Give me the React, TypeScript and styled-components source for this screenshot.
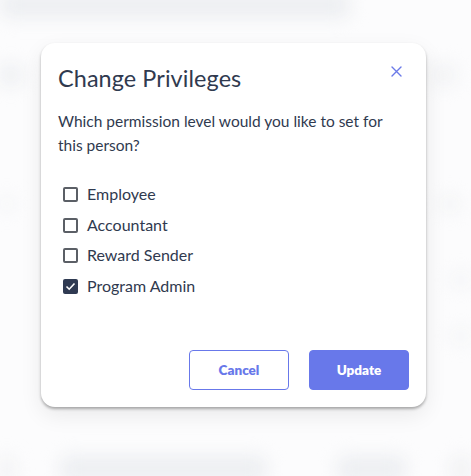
import React, { useState } from "react";
import styled, { createGlobalStyle } from "styled-components";

const Global = createGlobalStyle`
  html, body { margin: 0; padding: 0; background: #fcfcfd; }
  body { font-family: Lato, "Noto Sans", sans-serif; }
  * { box-sizing: border-box; }
`;

const Page = styled.div`
  position: relative;
  width: 471px;
  height: 476px;
  overflow: hidden;
  background: #fcfcfd;
`;

const Backdrop = styled.div`
  display: flex;
  flex-direction: column;
  filter: blur(9px);
  height: 100%;
`;

const BgRow = styled.div<{ $h: number; $mt?: number }>`
  display: flex;
  flex-shrink: 0;
  height: ${(p) => p.$h}px;
  margin-top: ${(p) => p.$mt ?? 0}px;
`;

const Blob = styled.div<{ $w: number; $ml?: number; $c?: string }>`
  width: ${(p) => p.$w}px;
  margin-left: ${(p) => p.$ml ?? 0}px;
  height: 100%;
  background: ${(p) => p.$c ?? "#eceef1"};
  border-radius: 8px;
`;

const Overlay = styled.div`
  position: absolute;
  inset: 0;
  padding: 43px 0 0 41px;
`;

const Modal = styled.div`
  width: 385px;
  height: 364px;
  background: #fff;
  border-radius: 14px;
  box-shadow: 0 2px 3px rgba(0, 0, 0, 0.3), 0 8px 22px rgba(0, 0, 0, 0.08);
  padding: 18px 17px 17px 17px;
  display: flex;
  flex-direction: column;
  color: #303a4f;
`;

const Header = styled.div`
  display: flex;
  justify-content: space-between;
  align-items: flex-start;
`;

const Title = styled.h2`
  margin: 0;
  font-size: 23.4px;
  font-weight: 400;
  line-height: 34px;
  letter-spacing: 0.1px;
`;

const Close = styled.button`
  border: 0;
  background: none;
  padding: 0;
  margin: 4px 7px 0 0;
  width: 12px;
  height: 12px;
  display: flex;
  align-items: center;
  justify-content: center;
  cursor: pointer;
`;

const Question = styled.p`
  margin: 14px 0 0 0;
  font-size: 15.5px;
  line-height: 24px;
  width: 340px;
`;

const Options = styled.div`
  display: flex;
  flex-direction: column;
  margin-top: 27px;
  padding-left: 5px;
  gap: 10px;
`;

const Option = styled.label`
  display: flex;
  align-items: center;
  gap: 9px;
  font-size: 16px;
  line-height: 20.7px;
  cursor: pointer;
`;

const Box = styled.span<{ $checked: boolean }>`
  width: 15px;
  height: 15px;
  border-radius: 2px;
  border: ${(p) => (p.$checked ? "none" : "2px solid #5b5f66")};
  background: ${(p) => (p.$checked ? "#2f3a52" : "#fff")};
  display: flex;
  align-items: center;
  justify-content: center;
  flex-shrink: 0;
`;

const Footer = styled.div`
  margin-top: auto;
  display: flex;
  justify-content: flex-end;
  gap: 20px;
`;

const Button = styled.button<{ $primary?: boolean }>`
  width: 100px;
  height: 40px;
  border-radius: 4px;
  font-family: Lato, "Noto Sans", sans-serif;
  font-weight: 800;
  font-size: 13.5px;
  cursor: pointer;
  border: 1px solid #6878ea;
  background: ${(p) => (p.$primary ? "#6878ea" : "#fff")};
  color: ${(p) => (p.$primary ? "#fff" : "#6878ea")};
`;

const OPTIONS = ["Employee", "Accountant", "Reward Sender", "Program Admin"];

export default function App() {
  const [selected, setSelected] = useState<string[]>(["Program Admin"]);
  const toggle = (o: string) =>
    setSelected((s) => (s.includes(o) ? s.filter((x) => x !== o) : [...s, o]));

  return (
    <Page>
      <Global />
      <Backdrop aria-hidden>
        <BgRow $h={26} $mt={-8}>
          <Blob $w={350} />
        </BgRow>
        <BgRow $h={22} $mt={46}>
          <Blob $w={22} />
          <Blob $w={24} $ml={410} $c="#f1f2f4" />
        </BgRow>
        <BgRow $h={16} $mt={110}>
          <Blob $w={14} $c="#f3f4f6" />
          <Blob $w={20} $ml={426} $c="#f1f2f4" />
        </BgRow>
        <BgRow $h={16} $mt={60}>
          <Blob $w={20} $ml={451} $c="#f3f4f6" />
        </BgRow>
        <BgRow $h={16} $mt={40}>
          <Blob $w={20} $ml={451} $c="#f3f4f6" />
        </BgRow>
        <BgRow $h={26} $mt={112}>
          <Blob $w={14} $c="#eff0f2" />
          <Blob $w={210} $ml={46} />
          <Blob $w={70} $ml={70} />
          <Blob $w={20} $ml={45} $c="#eff0f2" />
        </BgRow>
      </Backdrop>
      <Overlay>
        <Modal role="dialog" aria-labelledby="title">
          <Header>
            <Title id="title">Change Privileges</Title>
            <Close aria-label="Close">
              <svg width="11" height="11" viewBox="0 0 11 11">
                <path
                  d="M1 1 L10 10 M10 1 L1 10"
                  stroke="#6b7ae8"
                  strokeWidth="1.4"
                  strokeLinecap="round"
                />
              </svg>
            </Close>
          </Header>
          <Question>Which permission level would you like to set for this person?</Question>
          <Options>
            {OPTIONS.map((o) => {
              const checked = selected.includes(o);
              return (
                <Option key={o} onClick={() => toggle(o)}>
                  <Box $checked={checked}>
                    {checked && (
                      <svg width="11" height="9" viewBox="0 0 11 9">
                        <path
                          d="M1.5 4.5 L4.2 7.2 L9.5 1.5"
                          fill="none"
                          stroke="#fff"
                          strokeWidth="1.6"
                        />
                      </svg>
                    )}
                  </Box>
                  {o}
                </Option>
              );
            })}
          </Options>
          <Footer>
            <Button>Cancel</Button>
            <Button $primary>Update</Button>
          </Footer>
        </Modal>
      </Overlay>
    </Page>
  );
}
